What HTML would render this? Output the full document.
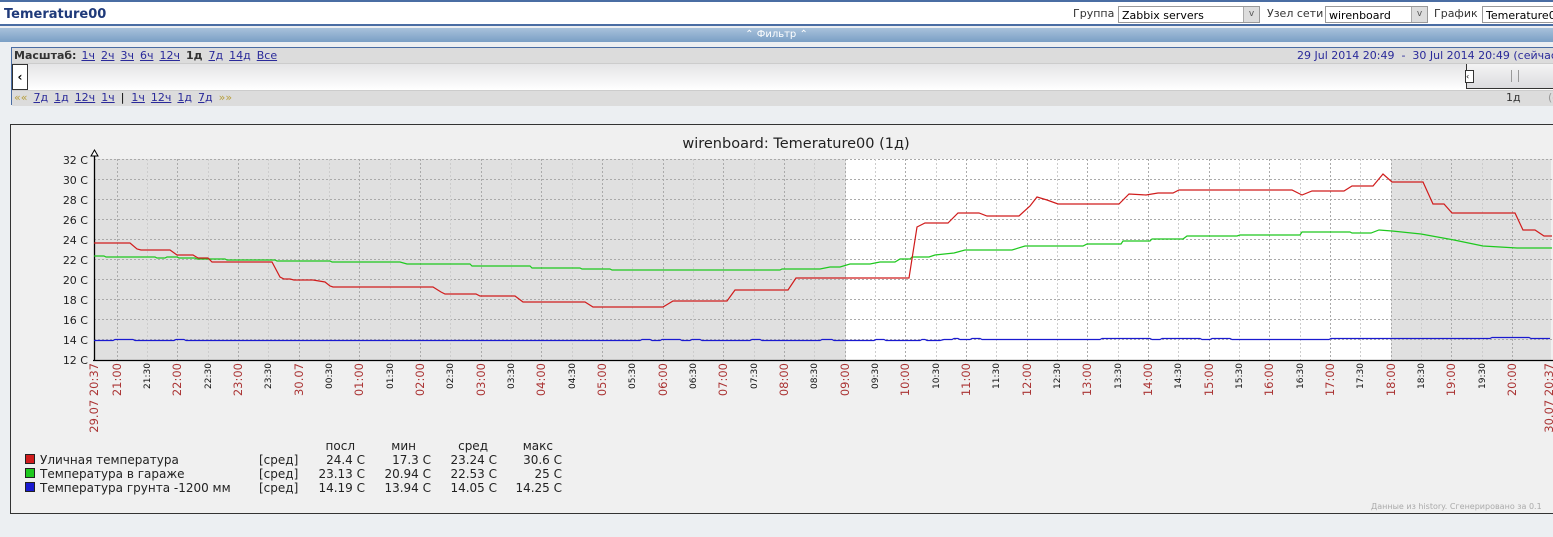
<!DOCTYPE html>
<html><head><meta charset="utf-8"><style>
body{margin:0;width:1553px;height:537px;overflow:hidden;background:#eceff2;font-family:"DejaVu Sans","Liberation Sans",sans-serif;position:relative}
.hdr{position:absolute;left:0;top:0;width:1553px;height:26px;background:#fff;border-top:2px solid #4a6da3;border-bottom:2px solid #4a6da3;box-sizing:border-box}
.title{position:absolute;left:4px;top:5px;font:bold 13px "DejaVu Sans",sans-serif;color:#1f3a7a}
.sel{position:absolute;top:5px;font-size:11px;color:#333}
.box{position:absolute;top:4px;height:17px;border:1px solid #999;background:#fff;font-size:11px;box-sizing:border-box;padding:2px 3px;color:#000}
.box i{position:absolute;right:0;top:0;width:15px;height:15px;background:#ddd;border-left:1px solid #aaa;font-style:normal;font-size:9px;text-align:center;line-height:15px;color:#555}
.filt{position:absolute;left:0;top:28px;width:1553px;height:14px;background:linear-gradient(#a8c1db,#7a9fc5);color:#fff;font-size:10px;text-align:center;line-height:14px}
.tl{position:absolute;left:11px;top:47px;width:1560px;height:58px;border:1px solid #4a6da3;background:#fff;box-sizing:border-box}
.r1{position:absolute;left:0;top:0;right:0;height:15px;background:#dcdcdc;border-bottom:1px solid #ccc;font-size:11px;line-height:15px}
.r2{position:absolute;left:0;top:16px;right:0;height:26px;background:linear-gradient(#e4e4e6,#fff)}
.r3{position:absolute;left:0;top:42px;right:0;height:15px;background:#dcdcdc;border-top:1px solid #ccc;font-size:11px;line-height:14px}
a{color:#2a2a9a;text-decoration:underline;margin-right:6px}
.gb{position:absolute;left:10px;top:124px;width:1560px;height:390px;border:1px solid #333;background:#f0f0f0;box-sizing:border-box}
</style></head><body>
<div class="hdr"><div class="title">Temerature00</div>
<span class="sel" style="left:1073px">Группа</span><div class="box" style="left:1118px;width:142px">Zabbix servers<i>v</i></div>
<span class="sel" style="left:1267px">Узел сети</span><div class="box" style="left:1325px;width:103px">wirenboard<i>v</i></div>
<span class="sel" style="left:1434px">График</span><div class="box" style="left:1482px;width:80px;overflow:hidden">Temerature00</div></div>
<div class="filt">&#8963; Фильтр &#8963;</div>
<div class="tl">
<div class="r1"><b style="color:#333;margin:0 5px 0 2px">Масштаб:</b><a>1ч</a><a>2ч</a><a>3ч</a><a>6ч</a><a>12ч</a><b style="margin-right:6px;color:#333">1д</b><a>7д</a><a>14д</a><a>Все</a>
<span style="position:absolute;left:1285px;color:#2a2a9a;white-space:nowrap">29 Jul 2014 20:49 &nbsp;- &nbsp;30 Jul 2014 20:49 (сейчас)</span></div>
<div class="r2"><div style="position:absolute;left:0;top:0;width:14px;height:24px;border:1px solid #333;background:#fff;font-weight:bold;font-size:12px;text-align:center;line-height:24px">‹</div>
<div style="position:absolute;left:1454px;top:0;width:100px;height:24px;border-left:1px solid #333;border-bottom:1px solid #333;background:linear-gradient(#f4f4f4,#dcdcdf)"><span style="position:absolute;left:-2px;top:6px;width:7px;height:11px;border:1px solid #333;background:#fff;font-size:8px;line-height:11px">‹</span><span style="position:absolute;left:44px;top:6px;width:6px;height:12px;border-left:1px solid #999;border-right:1px solid #999"></span></div></div>
<div class="r3"><span style="color:#b8a040;margin:0 6px 0 2px">««</span><a>7д</a><a>1д</a><a>12ч</a><a>1ч</a><span style="margin-right:7px">|</span><a>1ч</a><a>12ч</a><a>1д</a><a>7д</a><span style="color:#b8a040">»»</span>
<span style="position:absolute;left:1494px;color:#333">1д</span><span style="position:absolute;left:1536px;color:#999">(ф</span></div>
</div>
<div class="gb"></div>
<svg style="position:absolute;left:0;top:0" width="1553" height="537" font-family="DejaVu Sans, Liberation Sans, sans-serif">
<text x="796" y="148" font-size="14.5" text-anchor="middle" fill="#222">wirenboard: Temerature00 (1д)</text>
<rect x="94" y="159" width="752" height="201" fill="#e0e0e0"/>
<rect x="846" y="159" width="545" height="201" fill="#fff"/>
<rect x="1391" y="159" width="160" height="201" fill="#e0e0e0"/>
<g stroke="#aaa" stroke-dasharray="2,2" stroke-width="1">
<path d="M94 159.5H1553M94 179.5H1553M94 199.5H1553M94 219.5H1553M94 239.5H1553M94 259.5H1553M94 279.5H1553M94 299.5H1553M94 319.5H1553M94 339.5H1553"/>
<path d="M117.5 159V360M177.5 159V360M238.5 159V360M299.5 159V360M359.5 159V360M420.5 159V360M481.5 159V360M541.5 159V360M602.5 159V360M663.5 159V360M723.5 159V360M784.5 159V360M845.5 159V360M905.5 159V360M966.5 159V360M1027.5 159V360M1087.5 159V360M1148.5 159V360M1209.5 159V360M1269.5 159V360M1330.5 159V360M1391.5 159V360M1451.5 159V360M1512.5 159V360"/>
</g>
<g stroke="#ccc" stroke-dasharray="2,2">
<path d="M147.5 159V360M208.5 159V360M268.5 159V360M329.5 159V360M390.5 159V360M450.5 159V360M511.5 159V360M572.5 159V360M632.5 159V360M693.5 159V360M754.5 159V360M814.5 159V360M875.5 159V360M936.5 159V360M996.5 159V360M1057.5 159V360M1118.5 159V360M1178.5 159V360M1239.5 159V360M1300.5 159V360M1360.5 159V360M1421.5 159V360M1482.5 159V360"/>
</g>
<path d="M94.5 152V361M93 360.5H1553" stroke="#000" stroke-width="1.3" fill="none"/>
<path d="M91 156L94.5 150L98 156Z" fill="#fff" stroke="#000"/>
<g font-size="11" fill="#222" text-anchor="end">
<text x="88" y="164">32 C</text><text x="88" y="184">30 C</text><text x="88" y="204">28 C</text><text x="88" y="224">26 C</text><text x="88" y="244">24 C</text><text x="88" y="264">22 C</text><text x="88" y="284">20 C</text><text x="88" y="304">18 C</text><text x="88" y="324">16 C</text><text x="88" y="344">14 C</text><text x="88" y="364">12 C</text>
</g>
<path d="M94 340.5H113L115 339.5H133L135 340.5H174L176 339.5H184L186 340.5H640L642 339.5H650L652 340.5H660L662 339.5H680L682 340.5H690L692 339.5H700L702 340.5H750L752 339.5H760L762 340.5H820L822 339.5H832L834 340.5H874L876 339.5H884L886 340.5H920L922 339.5H925L927 340.5H940L944 339.5H952L954 338.5H958L960 339.5H970L972 338.5H980L982 339.5H1100L1102 338.5H1150L1152 339.5H1160L1162 338.5H1200L1202 339.5H1210L1212 338.5H1230L1232 339.5H1329L1331 338.5H1490L1492 337.5H1529L1531 338.5H1550" stroke="#1a1ad0" stroke-width="1.2" fill="none"/>
<path d="M94 256H104L106 257H155L157 258H165L167 257H177L179 258H195L197 259H225L227 260H275L277 261H330L332 262H400L407 264H470L472 266H530L532 268H580L582 269H610L612 270H780L782 269H820L830 267H840L850 264H870L880 262H895L900 259H910L912 257H929L935 255L954 253L965 250H1012L1025 246H1083L1087 244H1121L1123 241H1150L1152 239H1183L1187 236H1237L1240 235H1300L1302 232H1350L1352 233H1371L1379 230L1392 231L1421 234L1454 240L1483 246L1517 248H1552" stroke="#1ec81e" stroke-width="1.2" fill="none"/>
<path d="M94 243H130L137 249L141 250H170L177 255H193L198 258H208L212 262H272L280 277L284 279H290L294 280H313L325 282L330 286L333 287H433L441 292L445 294H476L480 296H515L523 302H585L593 307H663L668 304L673 301H727L735 290H788L796 278H909L917 227L925 223H948L958 213H979L987 216H1019L1030 206L1037 197L1047 200L1058 204H1119L1129 194L1146 195L1158 193H1173L1179 190H1292L1302 195L1312 191H1344L1352 186H1373L1383 174L1392 182H1423L1433 204H1444L1452 213H1515L1523 230H1535L1544 236H1552" stroke="#d01c1c" stroke-width="1.2" fill="none"/>
<g font-size="11.5" fill="#a33" text-anchor="end">
<text transform="translate(98,363) rotate(-90)">29.07 20:37</text>
<text transform="translate(121,363) rotate(-90)">21:00</text>
<text transform="translate(181,363) rotate(-90)">22:00</text>
<text transform="translate(242,363) rotate(-90)">23:00</text>
<text transform="translate(303,363) rotate(-90)">30.07</text>
<text transform="translate(363,363) rotate(-90)">01:00</text>
<text transform="translate(424,363) rotate(-90)">02:00</text>
<text transform="translate(485,363) rotate(-90)">03:00</text>
<text transform="translate(545,363) rotate(-90)">04:00</text>
<text transform="translate(606,363) rotate(-90)">05:00</text>
<text transform="translate(667,363) rotate(-90)">06:00</text>
<text transform="translate(727,363) rotate(-90)">07:00</text>
<text transform="translate(788,363) rotate(-90)">08:00</text>
<text transform="translate(849,363) rotate(-90)">09:00</text>
<text transform="translate(909,363) rotate(-90)">10:00</text>
<text transform="translate(970,363) rotate(-90)">11:00</text>
<text transform="translate(1031,363) rotate(-90)">12:00</text>
<text transform="translate(1091,363) rotate(-90)">13:00</text>
<text transform="translate(1152,363) rotate(-90)">14:00</text>
<text transform="translate(1213,363) rotate(-90)">15:00</text>
<text transform="translate(1273,363) rotate(-90)">16:00</text>
<text transform="translate(1334,363) rotate(-90)">17:00</text>
<text transform="translate(1395,363) rotate(-90)">18:00</text>
<text transform="translate(1455,363) rotate(-90)">19:00</text>
<text transform="translate(1516,363) rotate(-90)">20:00</text>
<text transform="translate(1553,363) rotate(-90)">30.07 20:37</text>
</g>
<g font-size="9" fill="#111" text-anchor="end">
<text transform="translate(150,363) rotate(-90)">21:30</text>
<text transform="translate(211,363) rotate(-90)">22:30</text>
<text transform="translate(271,363) rotate(-90)">23:30</text>
<text transform="translate(332,363) rotate(-90)">00:30</text>
<text transform="translate(393,363) rotate(-90)">01:30</text>
<text transform="translate(453,363) rotate(-90)">02:30</text>
<text transform="translate(514,363) rotate(-90)">03:30</text>
<text transform="translate(575,363) rotate(-90)">04:30</text>
<text transform="translate(635,363) rotate(-90)">05:30</text>
<text transform="translate(696,363) rotate(-90)">06:30</text>
<text transform="translate(757,363) rotate(-90)">07:30</text>
<text transform="translate(817,363) rotate(-90)">08:30</text>
<text transform="translate(878,363) rotate(-90)">09:30</text>
<text transform="translate(939,363) rotate(-90)">10:30</text>
<text transform="translate(999,363) rotate(-90)">11:30</text>
<text transform="translate(1060,363) rotate(-90)">12:30</text>
<text transform="translate(1121,363) rotate(-90)">13:30</text>
<text transform="translate(1181,363) rotate(-90)">14:30</text>
<text transform="translate(1242,363) rotate(-90)">15:30</text>
<text transform="translate(1303,363) rotate(-90)">16:30</text>
<text transform="translate(1363,363) rotate(-90)">17:30</text>
<text transform="translate(1424,363) rotate(-90)">18:30</text>
<text transform="translate(1485,363) rotate(-90)">19:30</text>
</g>
<g font-size="12" fill="#222">
<rect x="25.5" y="454.5" width="9" height="9" fill="#d01c1c" stroke="#222"/>
<rect x="25.5" y="468.5" width="9" height="9" fill="#1ec81e" stroke="#222"/>
<rect x="25.5" y="482.5" width="9" height="9" fill="#1a1ad0" stroke="#222"/>
<text x="40" y="464">Уличная температура</text>
<text x="40" y="478">Температура в гараже</text>
<text x="40" y="492">Температура грунта -1200 мм</text>
<text x="259" y="464">[сред]</text><text x="259" y="478">[сред]</text><text x="259" y="492">[сред]</text>
<g text-anchor="end">
<text x="355" y="450">посл</text><text x="416" y="450">мин</text><text x="488" y="450">сред</text><text x="553" y="450">макс</text>
<text x="365" y="464">24.4 C</text><text x="431" y="464">17.3 C</text><text x="497" y="464">23.24 C</text><text x="562" y="464">30.6 C</text>
<text x="365" y="478">23.13 C</text><text x="431" y="478">20.94 C</text><text x="497" y="478">22.53 C</text><text x="562" y="478">25 C</text>
<text x="365" y="492">14.19 C</text><text x="431" y="492">13.94 C</text><text x="497" y="492">14.05 C</text><text x="562" y="492">14.25 C</text>
</g></g>
<text x="1371" y="509" font-size="8" fill="#aaa">Данные из history. Сгенерировано за 0.1</text>
</svg>
</body></html>
